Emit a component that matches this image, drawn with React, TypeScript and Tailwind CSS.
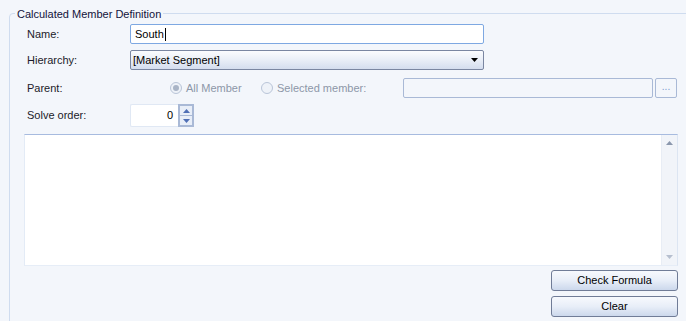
import React from 'react'

const font = { fontFamily: '"Liberation Sans", Arial, sans-serif' }

function Radio({ checked, label }: { checked?: boolean; label: string }) {
  return (
    <div className="flex items-center gap-[4px] text-[#8d97a8]">
      <span className="w-[12px] h-[12px] rounded-full border border-[#b9c5d8] bg-[#eef2f8] flex items-center justify-center">
        {checked && <span className="w-[6px] h-[6px] rounded-full bg-[#a9b4c6]" />}
      </span>
      <span>{label}</span>
    </div>
  )
}

function SpinArrow({ up, color }: { up?: boolean; color: string }) {
  return (
    <svg width="7" height="4" viewBox="0 0 7 4">
      <path d={up ? 'M0 4h7L3.5 0z' : 'M0 0h7L3.5 4z'} fill={color} />
    </svg>
  )
}

export default function App() {
  return (
    <div className="w-[686px] h-[321px] bg-[#f3f6fb] overflow-hidden text-[11px] text-[#1b1b2a]" style={font}>
      <fieldset className="ml-[9px] mt-[5px] w-[700px] h-[330px] border border-[#cfdcef] rounded-tl-[4px] pl-[14px]">
        <legend className="ml-[-9px] px-[2px] leading-[14px] pt-[2px] text-[#12123a]">Calculated Member Definition</legend>
        <div className="w-[654px]">
          <div className="flex items-center h-[20px] mt-[3px]">
            <div className="w-[106px] pl-[3px]">Name:</div>
            <div className="w-[354px] h-[20px] bg-white border border-[#7ea8e2] rounded-[2px] flex items-center pl-[4px] text-black">
              South<span className="w-px h-[13px] bg-black ml-px" />
            </div>
          </div>
          <div className="flex items-center h-[20px] mt-[6px]">
            <div className="w-[106px] pl-[3px]">Hierarchy:</div>
            <div className="w-[354px] h-[20px] border border-[#7a86a1] rounded-[2px] bg-gradient-to-b from-[#fbfcfe] via-[#e9eef7] to-[#d4ddee] flex items-center pl-[2px] pr-[5px] text-black">
              <span className="flex-1">[Market Segment]</span>
              <SpinArrow color="#000" />
            </div>
          </div>
          <div className="flex items-center h-[20px] mt-[8px]">
            <div className="w-[146px] pl-[3px]">Parent:</div>
            <div className="w-[91px]"><Radio checked label="All Member" /></div>
            <div className="w-[142px]"><Radio label="Selected member:" /></div>
            <div className="w-[250px] h-[20px] border border-[#a9b9d6] bg-[#f3f6fb] rounded-[2px]" />
            <div className="ml-[2px] w-[22px] h-[20px] border border-[#a9b9d6] rounded-[2px] flex items-center justify-center text-[#7b9ad0] text-[10px] leading-none pb-[2px]">...</div>
          </div>
          <div className="flex items-center h-[23px] mt-[6px]">
            <div className="w-[106px] pl-[3px]">Solve order:</div>
            <div className="w-[48px] h-[23px] bg-white border-l border-t border-b border-[#e0e8f4] rounded-l-[2px] flex items-center justify-end pr-[5px] text-black">0</div>
            <div className="w-[16px] h-[23px] flex flex-col gap-[1px] border border-[#a9b9d6] bg-[#a9b9d6] p-px">
              <div className="flex-1 bg-[#e8eef8] flex items-center justify-center">
                <SpinArrow up color="#4f6fb5" />
              </div>
              <div className="flex-1 bg-[#e8eef8] flex items-center justify-center">
                <SpinArrow color="#4f6fb5" />
              </div>
            </div>
          </div>
          <div className="mt-[7px] h-[132px] bg-white border-t border-t-[#a7bbdf] border-l border-l-[#e3ebf6] border-b border-b-[#e6edf7] border-r border-r-[#dce5f2] flex justify-end">
            <div className="w-[16px] h-full bg-[#f1f4f9] border-l border-[#e8edf5] flex flex-col items-center justify-between py-[6px]">
              <SpinArrow up color="#8a97ad" />
              <SpinArrow color="#b6bfcf" />
            </div>
          </div>
          <div className="flex flex-col items-end gap-[5px] mt-[4px]">
            <button className="w-[127px] h-[21px] border border-[#707c97] rounded-[3px] bg-gradient-to-b from-[#f7f9fd] via-[#e8eef8] to-[#ccd8ec] text-[11px] text-black leading-none" style={font}>Check Formula</button>
            <button className="w-[127px] h-[21px] border border-[#707c97] rounded-[3px] bg-gradient-to-b from-[#f7f9fd] via-[#e8eef8] to-[#ccd8ec] text-[11px] text-black leading-none" style={font}>Clear</button>
          </div>
        </div>
      </fieldset>
    </div>
  )
}
